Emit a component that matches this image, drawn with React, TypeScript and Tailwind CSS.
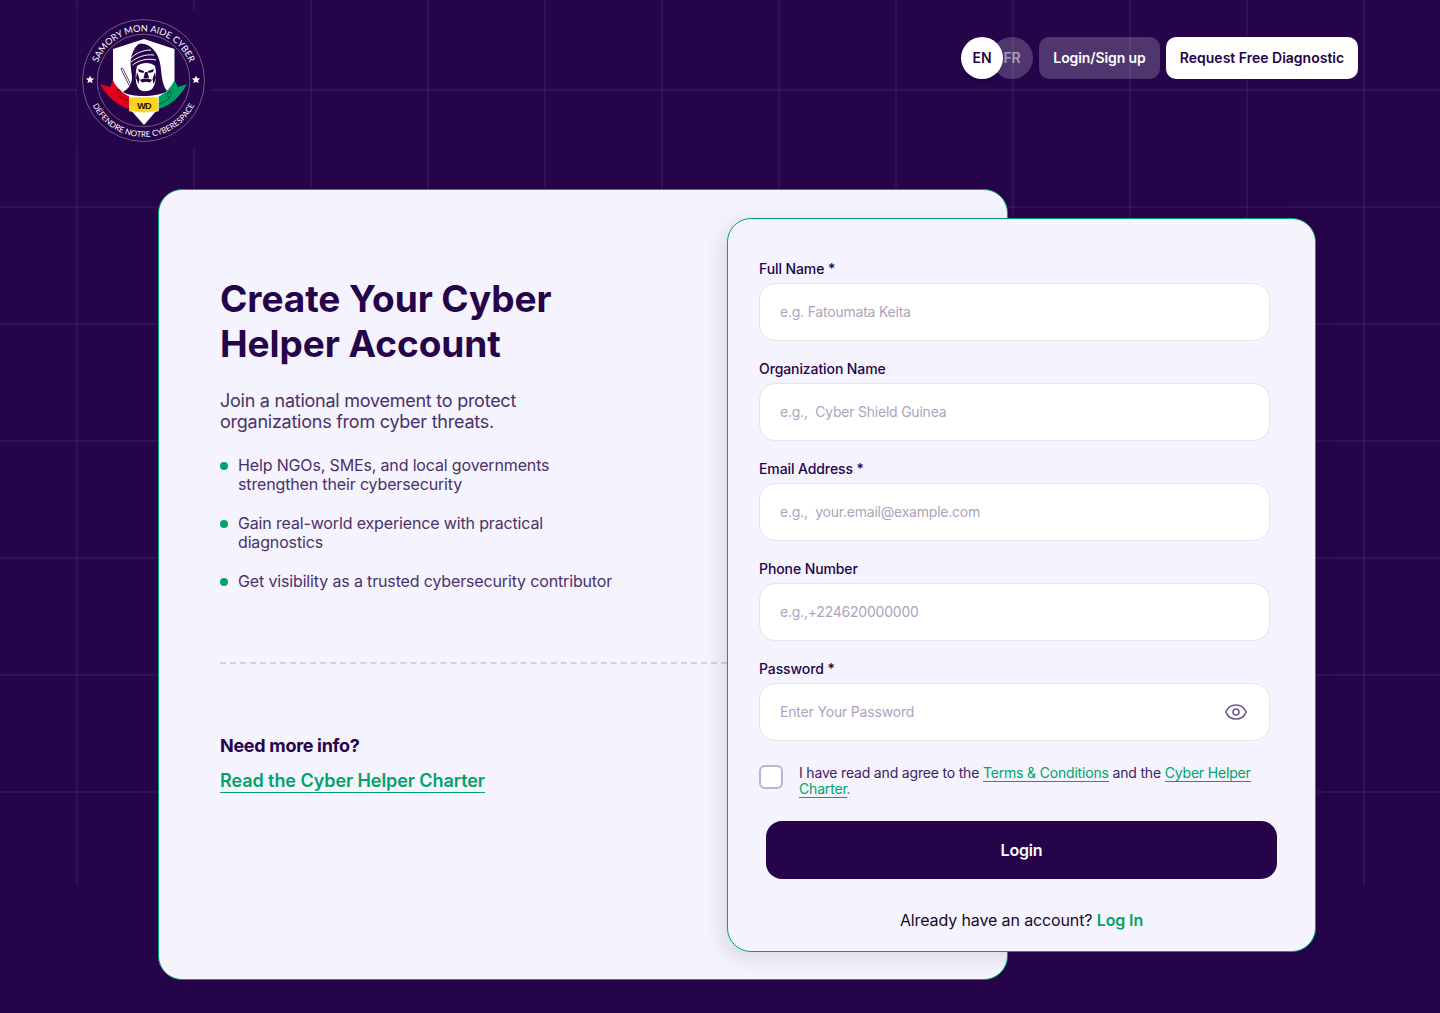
import React from 'react';
import { Eye } from 'lucide-react';

const fields = [
  { label: 'Full Name *', placeholder: 'e.g. Fatoumata Keita', type: 'text' },
  { label: 'Organization Name', placeholder: 'e.g.,  Cyber Shield Guinea', type: 'text' },
  { label: 'Email Address *', placeholder: 'e.g.,  your.email@example.com', type: 'email' },
  { label: 'Phone Number', placeholder: 'e.g.,+224620000000', type: 'tel' },
];

const perks = [
  'Help NGOs, SMEs, and local governments strengthen their cybersecurity',
  'Gain real-world experience with practical diagnostics',
  'Get visibility as a trusted cybersecurity contributor',
];

const Logo: React.FC = () => (
  <svg viewBox="77 10 134 138" className="block h-[138px] w-[134px] bg-[#25044a]">
    <defs>
      <path id="arcTop" d="M94.5 80.5 A49 49 0 0 1 192.5 80.5" />
      <path id="arcBottom" d="M87 80.5 A56.5 56.5 0 0 0 200 80.5" />
    </defs>
    <circle cx="143.5" cy="80.5" r="61" fill="none" stroke="#8f7ea8" strokeWidth="0.7" />
    <circle cx="143.5" cy="80.5" r="46.3" fill="none" stroke="#8f7ea8" strokeWidth="0.7" />
    <text fill="#fff" fontSize="9.2" fontFamily="Lato, sans-serif">
      <textPath href="#arcTop" startOffset="50%" textAnchor="middle">SAMORY MON AIDE CYBER</textPath>
    </text>
    <text fill="#fff" fontSize="8" fontFamily="Lato, sans-serif">
      <textPath href="#arcBottom" startOffset="50%" textAnchor="middle">DEFENDRE NOTRE CYBERESPACE</textPath>
    </text>
    <path fill="#fff" d="M90 75.5l1.2 2.7 2.9.3-2.2 1.9.7 2.9-2.6-1.5-2.6 1.5.7-2.9-2.2-1.9 2.9-.3z" />
    <path fill="#fff" d="M196 75.5l1.2 2.7 2.9.3-2.2 1.9.7 2.9-2.6-1.5-2.6 1.5.7-2.9-2.2-1.9 2.9-.3z" />
    {/* shield */}
    <path fill="#fff" d="M144 39 L174.5 49 V90 L144 125 L113 90 V49 Z" />
    {/* sword */}
    <path stroke="#25044a" strokeWidth="2.6" strokeLinecap="round" d="M122 69 L130 85" />
    <path stroke="#fff" strokeWidth="1.2" strokeLinecap="round" d="M122 69 L130 85" />
    {/* hooded figure */}
    <path
      fill="#25044a"
      d="M141 43.5 C150 43.5 158 52 160 63 C162 73 161 83 167 91 C159 97 132 98 123 92 C128 89 132 85 132 77 C131 67 129 60 133 52 C135 47 138 43.5 141 43.5 Z"
    />
    <path fill="none" stroke="#fff" strokeWidth="1" d="M131 62 C137 57 146 54 154 55 M130.5 58.5 C136 53 143 50 151 50 M132.5 65 C139 60 148 58 156 60" />
    <path
      fill="#fff"
      d="M137 66 C142 62 151 62 155 66 C157 74 156 84 152 89 C148 92 142 92 139 89 C135 84 135 74 137 66 Z"
    />
    <path
      fill="#25044a"
      d="M138 69 L144 71 L143.5 73 L139 72 Z M154 69 L148 71 L148.5 73 L153 72 Z M145 72 L147.5 72 L149 78 L143.5 78 Z M140 80 C143 78 149 78 152 80 L150 82.5 C147 81.5 145 81.5 142 82.5 Z M137 72 L139.5 79 L138.5 84 L136 78 Z M155 72 L152.5 79 L153.5 84 L156 78 Z"
    />
    {/* ribbon */}
    <path fill="#e2001f" d="M113 80 C115 86 122 93 130 97 V109 C119 106 108 99 100 84 L110 87 Z" />
    <path fill="#009f64" d="M174.5 80 C172 86 166 93 158 97 V109 C169 106 179 99 187 84 L178 87 Z" />
    <path fill="#ffd31f" stroke="#fff" strokeWidth="0.6" d="M129.5 97 H158.5 V111 L144 113 L129.5 111 Z" />
    <path fill="none" stroke="#3a0714" strokeWidth="0.6" d="M128 100 C124 100 121 98 119 96 M119 96 C116 94 117 91 119 89 C121 92 122 94 119 96" />
    <path fill="none" stroke="#04331f" strokeWidth="0.6" d="M159 104 C164 102 167 101 169 98 M169 98 C172 95 171 92 170 91 C167 93 167 96 169 98" />
    <text x="144" y="109" textAnchor="middle" fontSize="9" fontWeight="700" letterSpacing="-0.8" fill="#1a1208" fontFamily="'Liberation Sans', sans-serif">
      WD
    </text>
  </svg>
);

const App: React.FC = () => {
  return (
    <div className="relative h-[1013px] w-full overflow-hidden bg-[#25044a] [font-family:Inter,sans-serif]">
      {/* background grid */}
      <div className="absolute left-0 top-0 h-[885px] w-full bg-[linear-gradient(to_right,rgba(255,255,255,0.05)_2px,transparent_2px),linear-gradient(to_bottom,rgba(255,255,255,0.05)_2px,transparent_2px)] bg-[size:117px_117px] bg-[position:76px_89px]" />

      <div className="relative">
        <header className="flex h-[189px] items-start justify-between pl-[77px] pr-[82px] pt-[10px]">
          <Logo />
          <div className="mt-[27px] flex items-center gap-1.5">
            <div className="relative h-[42px] w-[72px]">
              <span className="absolute right-0 top-0 flex h-[42px] w-[42px] items-center justify-center rounded-full bg-white/20 text-sm font-semibold tracking-[-0.1px] text-white/50">
                FR
              </span>
              <span className="absolute left-0 top-0 flex h-[42px] w-[42px] items-center justify-center rounded-full bg-white text-sm font-semibold tracking-[-0.1px] text-[#25044a] shadow-md">
                EN
              </span>
            </div>
            <button className="h-[42px] w-[121px] rounded-[10px] bg-white/20 text-sm font-semibold tracking-[-0.1px] text-white">
              Login/Sign up
            </button>
            <button className="h-[42px] w-[192px] rounded-[10px] bg-white text-sm font-semibold text-[#25044a]">
              Request Free Diagnostic
            </button>
          </div>
        </header>

        <main className="flex items-start pl-[158px]">
          <section className="h-[791px] w-[850px] shrink-0 rounded-3xl border border-[#00a468] bg-[#f5f3fe] pl-[61px] pt-[86px]">
            <h1 className="w-[400px] text-[37px] font-bold leading-[45px] tracking-[-0.05px] text-[#25044a]">
              Create Your Cyber Helper Account
            </h1>
            <p className="mt-6 w-[320px] text-lg leading-[21px] tracking-[-0.25px] text-[#4a3268]">
              Join a national movement to protect organizations from cyber threats.
            </p>
            <ul className="mt-6 flex w-[396px] flex-col gap-5">
              {perks.map((perk) => (
                <li key={perk} className="flex items-start gap-[10px] text-base leading-[19px] tracking-[-0.15px] text-[#4a3268]">
                  <span className="mt-[6px] h-2 w-2 shrink-0 rounded-full bg-[#00a468]" />
                  <span>{perk}</span>
                </li>
              ))}
            </ul>
            <div className="mt-[71px] w-[507px] border-t-2 border-dashed border-[#d5cfe0]" />
            <h2 className="mt-[71px] text-lg font-bold leading-[22px] tracking-[-0.3px] text-[#25044a]">
              Need more info?
            </h2>
            <a href="#" className="mt-[13px] inline-block border-b border-[#00a468] text-lg font-semibold leading-[22px] tracking-[-0.07px] text-[#00a468]">
              Read the Cyber Helper Charter
            </a>
          </section>

          <form className="relative -ml-[281px] mt-[29px] h-[734px] w-[589px] shrink-0 rounded-3xl border border-[#00a468] bg-[#f5f3fe] pl-[31px] pt-[42px] shadow-[-4px_6px_20px_rgba(37,6,76,0.12)]">
            <div className="flex w-[511px] flex-col gap-5">
              {fields.map((field) => (
                <label key={field.label} className="block">
                  <span className="block text-sm font-medium leading-4 tracking-[-0.1px] text-[#25044a]">{field.label}</span>
                  <input
                    type={field.type}
                    placeholder={field.placeholder}
                    className="mt-1.5 block h-[58px] w-full rounded-2xl border border-[#e6e3ec] bg-white px-5 pb-0.5 text-sm tracking-[-0.22px] text-[#25044a] placeholder:text-[#aea3bd]"
                  />
                </label>
              ))}
              <label className="block">
                <span className="block text-sm font-medium leading-4 tracking-[-0.1px] text-[#25044a]">Password *</span>
                <span className="mt-1.5 flex h-[58px] w-full items-center rounded-2xl border border-[#e6e3ec] bg-white pl-5 pr-[21px]">
                  <input
                    type="password"
                    placeholder="Enter Your Password"
                    className="min-w-0 flex-1 text-sm tracking-[-0.18px] outline-none placeholder:text-[#aea3bd]"
                  />
                  <Eye size={24} strokeWidth={1.6} className="text-[#6f5b8a]" />
                </span>
              </label>
            </div>

            <div className="mt-6 flex w-[511px] items-start gap-4">
              <input
                type="checkbox"
                className="h-6 w-6 shrink-0 appearance-none rounded-md border-2 border-[#bdb3cc] bg-white"
              />
              <p className="text-sm leading-4 tracking-[-0.18px] text-[#3d2260]">
                I have read and agree to the{' '}
                <a href="#" className="border-b border-[#00a468] text-[#00a468]">Terms &amp; Conditions</a> and the{' '}
                <a href="#" className="border-b border-[#00a468] text-[#00a468]">Cyber Helper Charter</a>
                <span className="text-[#00a468]">.</span>
              </p>
            </div>

            <button type="button" className="ml-[7px] mt-6 block h-[58px] w-[511px] rounded-2xl bg-[#25044a] text-base font-semibold tracking-[-0.2px] text-white">
              Login
            </button>

            <p className="ml-[7px] mt-[31px] w-[511px] text-center text-base leading-5 tracking-[-0.12px] text-[#180a2a]">
              Already have an account? <a href="#" className="font-semibold text-[#00a468]">Log In</a>
            </p>
          </form>
        </main>
      </div>
    </div>
  );
};

export default App;
